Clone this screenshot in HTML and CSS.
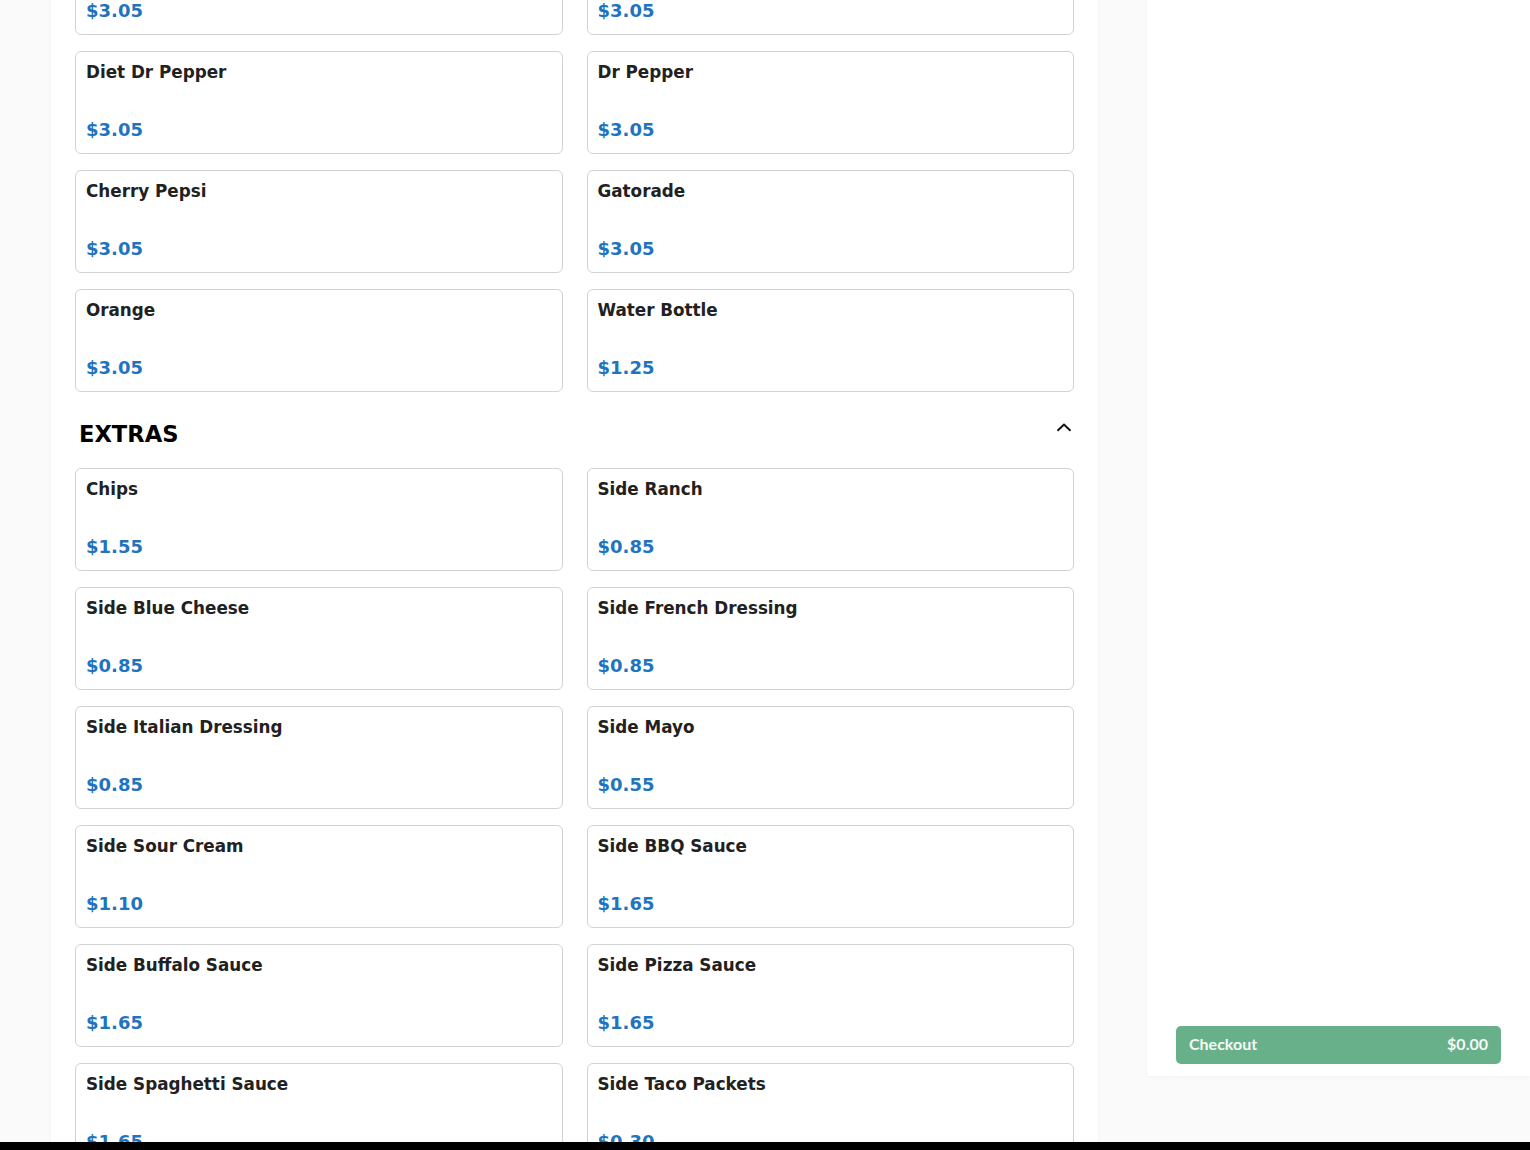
FILE: index.html
```html
<!DOCTYPE html>
<html lang="en">
<head>
<meta charset="utf-8">
<title>Menu</title>
<link rel="stylesheet" href="styles.css">
</head>
<body>
<div class="layout">
  <main class="menu">
    <div class="menu-inner">
      <section class="section">
        <div class="grid">
          <div class="card"><div class="name">Pepsi</div><div class="price">$3.05</div></div>
          <div class="card"><div class="name">Diet Pepsi</div><div class="price">$3.05</div></div>
          <div class="card"><div class="name">Diet Dr Pepper</div><div class="price">$3.05</div></div>
          <div class="card"><div class="name">Dr Pepper</div><div class="price">$3.05</div></div>
          <div class="card"><div class="name">Cherry Pepsi</div><div class="price">$3.05</div></div>
          <div class="card"><div class="name">Gatorade</div><div class="price">$3.05</div></div>
          <div class="card"><div class="name">Orange</div><div class="price">$3.05</div></div>
          <div class="card"><div class="name">Water Bottle</div><div class="price">$1.25</div></div>
        </div>
      </section>
      <section class="section">
        <div class="section-head">
          <h2 class="section-title">EXTRAS</h2>
          <svg class="chevron" width="16" height="9" viewBox="0 0 16 9" aria-hidden="true"><path d="M1.5 7.8 L8 1.6 L14.5 7.8" fill="none" stroke="#111" stroke-width="2"/></svg>
        </div>
        <div class="grid">
          <div class="card"><div class="name">Chips</div><div class="price">$1.55</div></div>
          <div class="card"><div class="name">Side Ranch</div><div class="price">$0.85</div></div>
          <div class="card"><div class="name">Side Blue Cheese</div><div class="price">$0.85</div></div>
          <div class="card"><div class="name">Side French Dressing</div><div class="price">$0.85</div></div>
          <div class="card"><div class="name">Side Italian Dressing</div><div class="price">$0.85</div></div>
          <div class="card"><div class="name">Side Mayo</div><div class="price">$0.55</div></div>
          <div class="card"><div class="name">Side Sour Cream</div><div class="price">$1.10</div></div>
          <div class="card"><div class="name">Side BBQ Sauce</div><div class="price">$1.65</div></div>
          <div class="card"><div class="name">Side Buffalo Sauce</div><div class="price">$1.65</div></div>
          <div class="card"><div class="name">Side Pizza Sauce</div><div class="price">$1.65</div></div>
          <div class="card"><div class="name">Side Spaghetti Sauce</div><div class="price">$1.65</div></div>
          <div class="card"><div class="name">Side Taco Packets</div><div class="price">$0.30</div></div>
        </div>
      </section>
    </div>
  </main>
  <aside class="cart">
    <button class="checkout" type="button"><span>Checkout</span><span>$0.00</span></button>
  </aside>
</div>
<div class="bottom-bar"></div>
</body>
</html>
```
FILE: styles.css
```css
html, body {
  margin: 0;
  padding: 0;
}
body {
  background: #fafafa;
  font-family: "DejaVu Sans", "Liberation Sans", sans-serif;
  height: 1150px;
  overflow: hidden;
}
.layout {
  display: flex;
  align-items: flex-start;
  gap: 49px;
  height: 1150px;
}
.menu {
  margin-left: 51px;
  width: 1047px;
  flex: none;
  height: 1150px;
  overflow: hidden;
  background: #fff;
  box-shadow: 0 0 2px rgba(0,0,0,0.06);
}
.menu-inner {
  margin-top: -68px;
  padding: 0 24px;
}
.grid {
  display: grid;
  grid-template-columns: 1fr 1fr;
  column-gap: 24px;
  row-gap: 16px;
}
.card {
  box-sizing: border-box;
  height: 103px;
  border: 1px solid #d2d2d2;
  border-radius: 6px;
  padding: 10px 10px 12px;
  display: flex;
  flex-direction: column;
  background: #fff;
}
.name {
  font-size: 16.8px;
  font-weight: bold;
  line-height: 20px;
  color: #212121;
}
.price {
  margin-top: auto;
  font-size: 18px;
  font-weight: bold;
  line-height: 22px;
  color: #1f74bf;
}
.section-head {
  display: flex;
  justify-content: space-between;
  align-items: flex-start;
  padding: 29px 2px 20px 4px;
}
.section-title {
  margin: 0;
  font-size: 22.6px;
  line-height: 27px;
  font-weight: bold;
  color: #000;
}
.chevron {
  margin-top: 2px;
  display: block;
}
.cart {
  box-sizing: border-box;
  width: 383px;
  flex: none;
  height: 1076px;
  background: #fff;
  box-shadow: 0 0 3px rgba(0,0,0,0.06);
  display: flex;
  flex-direction: column;
  justify-content: flex-end;
  padding: 0 29px 12px;
}
.checkout {
  display: flex;
  justify-content: space-between;
  align-items: center;
  height: 38px;
  padding: 0 13px 3px;
  border: none;
  border-radius: 5px;
  background: #68b08a;
  color: #f4fbf7;
  font-family: Lato, "Open Sans", sans-serif;
  font-weight: 700;
  font-size: 16px;
  cursor: pointer;
}
.bottom-bar {
  position: fixed;
  left: 0;
  right: 0;
  bottom: 0;
  height: 8px;
  background: #000;
}
```
